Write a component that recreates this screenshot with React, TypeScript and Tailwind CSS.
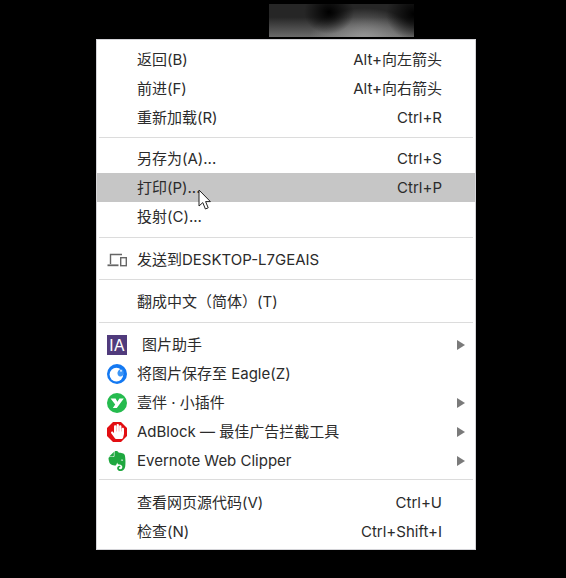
import React from 'react';
import { FaHandPaper } from 'react-icons/fa';
import { SiEvernote } from 'react-icons/si';

function Sep({ top, bottom }: { top: string; bottom: string }) {
  return <div className={`${top} ${bottom} mx-[2px] h-px bg-[#dcdcdc]`} />;
}

function Row({
  label,
  keys,
  icon,
  hover,
  arrow,
  labelClass,
}: {
  label: string;
  keys?: string;
  icon?: React.ReactNode;
  hover?: boolean;
  arrow?: boolean;
  labelClass?: string;
}) {
  return (
    <div className={`flex h-[29px] items-center ${hover ? 'bg-[#c6c6c6]' : ''}`}>
      <div className="flex w-[40px] shrink-0 items-center pl-[10px]">{icon}</div>
      <span className={`flex-1 whitespace-nowrap pt-[2px] ${labelClass ?? ''}`}>{label}</span>
      {keys && <span className="whitespace-nowrap pt-[2px]">{keys}</span>}
      <div className="flex w-[33px] shrink-0 justify-end pr-[10px]">
        {arrow && (
          <svg width="8" height="10" viewBox="0 0 8 10">
            <path d="M0 0L8 5L0 10Z" fill="#7a7a7a" />
          </svg>
        )}
      </div>
    </div>
  );
}

function DeviceIcon() {
  return (
    <svg width="20" height="14" viewBox="0 0 20 14" fill="none" stroke="#666666" strokeWidth="1.4">
      <path d="M3.5 11V1.5H15" />
      <path d="M0.5 12.3H11.5" strokeWidth="1.8" />
      <rect x="13.7" y="4.7" width="5.6" height="8" />
    </svg>
  );
}

function IaIcon() {
  return (
    <div className="flex h-[20px] w-[20px] items-center justify-center bg-[#503b7c] text-[16px] leading-none text-white">
      IA
    </div>
  );
}

function EagleIcon() {
  return (
    <svg width="20" height="20" viewBox="0 0 20 20">
      <circle cx="10" cy="10" r="10" fill="#1479f2" />
      <circle cx="9.4" cy="10.6" r="6.8" fill="#ffffff" />
      <path d="M10.5 8.4C11.2 6 13.4 4.8 15.2 5.2C16.4 6.4 17 8 16.6 9.6C16.2 11.8 14.6 12.8 12.8 12.4C11.2 12 10.2 10.2 10.5 8.4Z" fill="#3d96f7" />
      <circle cx="14" cy="6.8" r="0.9" fill="#ffffff" />
    </svg>
  );
}

function YibanIcon() {
  return (
    <svg width="20" height="20" viewBox="0 0 20 20">
      <circle cx="10" cy="10" r="10" fill="#25bb4e" />
      <path d="M3.6 5.6H8.6L10.4 8.8L12.4 5.6H16.8L9.8 15H5.8L8.2 11.6Z" fill="#ffffff" />
    </svg>
  );
}

function AdBlockIcon() {
  return (
    <div className="relative flex h-[20px] w-[20px] items-center justify-center">
      <svg width="20" height="20" viewBox="0 0 20 20" className="absolute inset-0">
        <path d="M6 0H14L20 6V14L14 20H6L0 14V6Z" fill="#e20e12" />
      </svg>
      <FaHandPaper className="relative h-[15px] w-[13px] text-white" />
    </div>
  );
}

export default function App() {
  return (
    <div
      className="relative h-[578px] w-[566px] overflow-hidden bg-black text-[15px] text-[#2b2b2b]"
      style={{ fontFamily: 'Inter, "Noto Sans CJK SC", sans-serif' }}
    >
      <div className="ml-[269px] mt-[4px] h-[33px] w-[145px] bg-[radial-gradient(ellipse_25px_22px_at_60px_8px,#000000,transparent),radial-gradient(ellipse_28px_26px_at_145px_10px,#000000,transparent),radial-gradient(ellipse_55px_32px_at_95px_36px,#9a9a9a,transparent),linear-gradient(#262626_40%,#6a6a6a)]" />
      <div className="ml-[96px] mt-[2px] h-[511px] w-[380px] border border-[#d4d4d8] bg-white pt-[5px]">
        <Row label="返回(B)" keys="Alt+向左箭头" />
        <Row label="前进(F)" keys="Alt+向右箭头" />
        <Row label="重新加载(R)" keys="Ctrl+R" />
        <Sep top="mt-[5px]" bottom="mb-[6px]" />
        <Row label="另存为(A)..." keys="Ctrl+S" />
        <Row label="打印(P)..." keys="Ctrl+P" hover />
        <Row label="投射(C)..." />
        <Sep top="mt-[6px]" bottom="mb-[7px]" />
        <Row label="发送到DESKTOP-L7GEAIS" icon={<DeviceIcon />} />
        <Sep top="mt-[5px]" bottom="mb-[7px]" />
        <Row label="翻成中文（简体）(T)" />
        <Sep top="mt-[6px]" bottom="mb-[7px]" />
        <Row label="图片助手" icon={<IaIcon />} arrow labelClass="pl-[5px]" />
        <Row label="将图片保存至 Eagle(Z)" icon={<EagleIcon />} />
        <Row label="壹伴 · 小插件" icon={<YibanIcon />} arrow />
        <Row label="AdBlock — 最佳广告拦截工具" icon={<AdBlockIcon />} arrow />
        <Row
          label="Evernote Web Clipper"
          icon={<SiEvernote className="h-[22px] w-[20px] text-[#1fa83f]" />}
          arrow
        />
        <Sep top="mt-[4px]" bottom="mb-[8px]" />
        <Row label="查看网页源代码(V)" keys="Ctrl+U" />
        <Row label="检查(N)" keys="Ctrl+Shift+I" />
      </div>
      <svg className="absolute left-[198px] top-[189px]" width="14" height="22" viewBox="0 0 14 22">
        <path
          d="M1 1V17L4.8 13.6L7.4 20L10.2 18.8L7.6 12.6H12.4Z"
          fill="#ffffff"
          stroke="#222222"
          strokeWidth="1"
        />
      </svg>
    </div>
  );
}
